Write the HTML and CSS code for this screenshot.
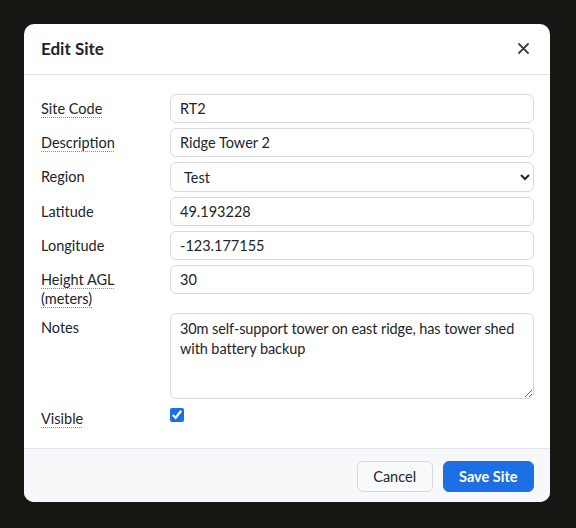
FILE: index.html
```html
<!DOCTYPE html>
<html lang="en">
<head>
<meta charset="utf-8">
<title>Edit Site</title>
<link rel="stylesheet" href="styles.css">
</head>
<body>
<div class="modal">
  <div class="modal-header">
    <h2 class="modal-title">Edit Site</h2>
    <button class="close-btn" aria-label="Close">
      <svg width="11" height="11" viewBox="0 0 11 11"><path d="M1 1L10 10M10 1L1 10" stroke="#3d3f42" stroke-width="1.8" stroke-linecap="round"/></svg>
    </button>
  </div>
  <form class="modal-body">
    <label class="lbl hint" for="code">Site Code</label>
    <input class="field" id="code" type="text" value="RT2">

    <label class="lbl hint" for="desc">Description</label>
    <input class="field" id="desc" type="text" value="Ridge Tower 2">

    <label class="lbl" for="region">Region</label>
    <select class="field select" id="region"><option>Test</option></select>

    <label class="lbl" for="lat">Latitude</label>
    <input class="field" id="lat" type="text" value="49.193228">

    <label class="lbl" for="lon">Longitude</label>
    <input class="field" id="lon" type="text" value="-123.177155">

    <label class="lbl hint" for="height">Height AGL (meters)</label>
    <input class="field" id="height" type="text" value="30">

    <label class="lbl" for="notes">Notes</label>
    <textarea class="field area" id="notes">30m self-support tower on east ridge, has tower shed with battery backup</textarea>

    <label class="lbl hint" for="visible">Visible</label>
    <div class="check-cell"><input class="check" id="visible" type="checkbox" checked></div>
  </form>
  <div class="modal-footer">
    <button class="btn btn-secondary" type="button">Cancel</button>
    <button class="btn btn-primary" type="button">Save Site</button>
  </div>
</div>
</body>
</html>
```
FILE: styles.css
```css
* { box-sizing: border-box; }
html, body { margin: 0; padding: 0; }
body {
  background: #181612;
  font-family: Lato, "Liberation Sans", sans-serif;
  color: #212529;
  font-size: 14.5px;
  padding: 24px 26px 26px 24px;
}
.modal {
  width: 526px;
  background: #ffffff;
  border-radius: 10px;
  overflow: hidden;
}
.modal-header {
  height: 51px;
  border-bottom: 1px solid #dfe2e5;
  display: flex;
  align-items: center;
  justify-content: space-between;
  padding: 0 16px 1px 17px;
}
.modal-title {
  margin: 0;
  font-size: 17px;
  font-weight: 700;
  color: #212529;
}
.close-btn {
  width: 22px;
  height: 22px;
  border: 0;
  background: transparent;
  padding: 0;
  display: flex;
  align-items: center;
  justify-content: center;
}
.modal-body {
  display: grid;
  grid-template-columns: 129px 1fr;
  row-gap: 5px;
  padding: 19px 16px 20px 17px;
  margin: 0;
}
.lbl {
  padding-top: 5px;
  padding-right: 14px;
  line-height: 19px;
  font-size: 14.5px;
  color: #212529;
}
.hint {
  text-decoration: underline dotted #8a8f94;
  text-decoration-thickness: 1px;
  text-underline-offset: 3px;
}
.field {
  width: 100%;
  height: 29px;
  border: 1px solid #d7dadd;
  border-radius: 6px;
  padding: 0 9px;
  font-family: Lato, "Liberation Sans", sans-serif;
  font-size: 14.5px;
  color: #212529;
  background: #ffffff;
  margin: 0;
}
.select {
  height: 30px;
  padding: 0 6px 0 9px;
}
.area {
  height: 86px;
  padding: 5px 8px 5px 9px;
  line-height: 20px;
  letter-spacing: -0.1px;
  resize: vertical;
}
.check-cell {
  padding-top: 4px;
}
.check {
  width: 14px;
  height: 14px;
  margin: 0;
  accent-color: #1b6fe6;
  display: block;
}
.modal-footer {
  border-top: 1px solid #e3e6e9;
  background: #f7f8fa;
  display: flex;
  justify-content: flex-end;
  gap: 10px;
  padding: 12px 16px 10px 16px;
}
.btn {
  height: 31px;
  padding: 0 15.5px;
  border-radius: 6px;
  font-family: Lato, "Liberation Sans", sans-serif;
  font-size: 14.5px;
}
.btn-secondary {
  background: #f8f9fa;
  border: 1px solid #d6d9dc;
  color: #212529;
}
.btn-primary {
  background: #1c6fe5;
  border: 1px solid #1c6fe5;
  color: #ffffff;
  font-weight: 700;
}
```
